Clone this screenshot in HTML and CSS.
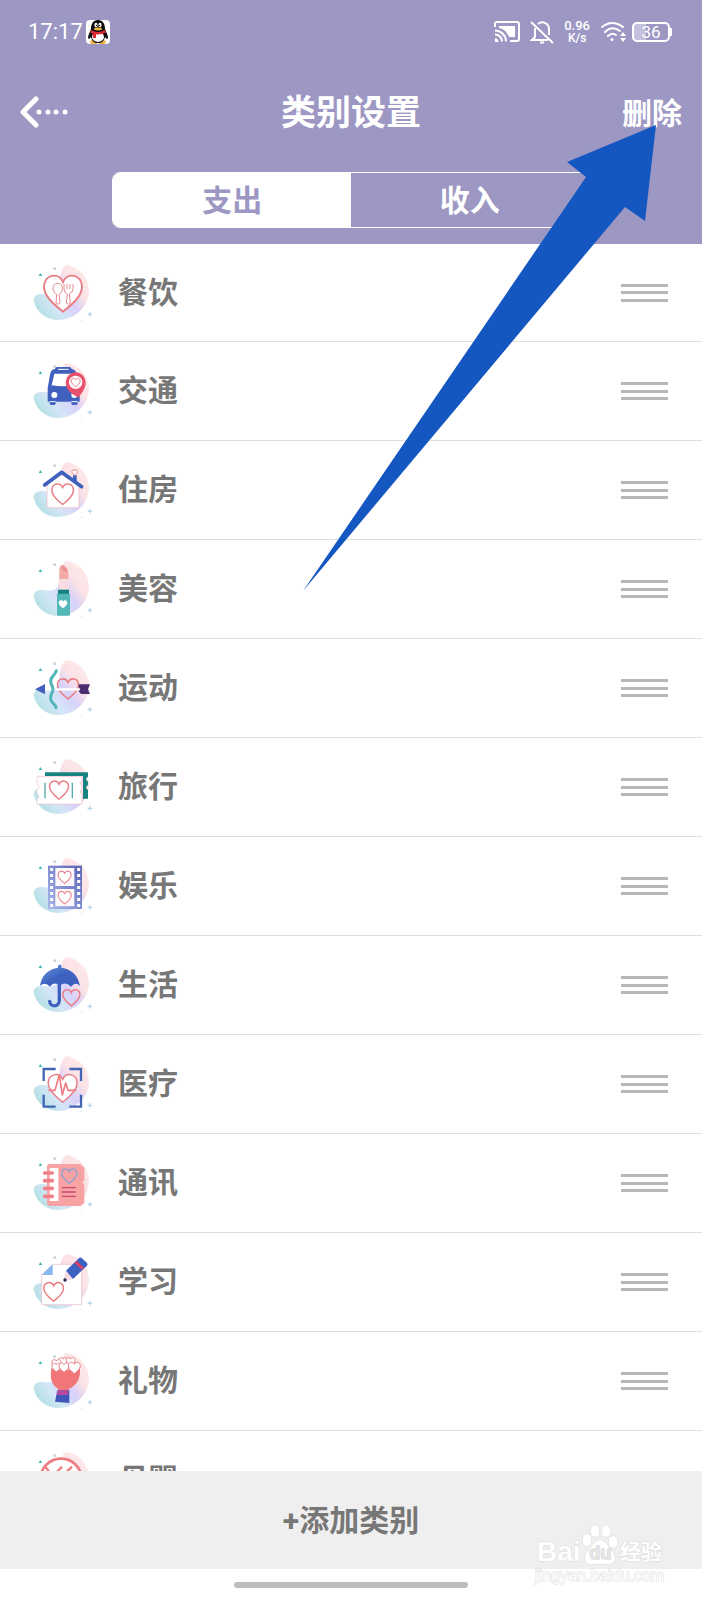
FILE: index.html
```html
<!DOCTYPE html>
<html lang="zh-CN">
<head>
    <meta charset="UTF-8">
    <meta name="viewport" content="width=device-width, initial-scale=1.0">
    <title>类别设置</title>
    <link rel="stylesheet" href="styles.css">
</head>
<body>
    <!-- 共用图形 -->
    <svg class="defs" width="0" height="0" aria-hidden="true">
        <defs>
            <linearGradient id="blobFill" gradientUnits="userSpaceOnUse" x1="50" y1="200" x2="190" y2="90">
                <stop offset="0" stop-color="#b0e0e1"/>
                <stop offset=".3" stop-color="#d4e6f7"/>
                <stop offset=".56" stop-color="#d8d1fa"/>
                <stop offset=".78" stop-color="#fbe2e6"/>
                <stop offset="1" stop-color="#fde8e8"/>
            </linearGradient>
            <linearGradient id="blue" x1="0" y1="0" x2="1" y2="1">
                <stop offset="0" stop-color="#6fa0e0"/>
                <stop offset=".5" stop-color="#3c62c0"/>
                <stop offset="1" stop-color="#3f5fbd"/>
            </linearGradient>
            <linearGradient id="film" x1="0" y1="1" x2="1" y2="0">
                <stop offset="0" stop-color="#a9b8ec"/>
                <stop offset="1" stop-color="#5a62b4"/>
            </linearGradient>
            <g id="blob">
                <path fill="url(#blobFill)" d="M138 60C178 64 208 98 208 138C207 186 165 226 112 225C78 224 48 200 42 166C42 150 58 145 78 148C102 151 116 146 119 120C120 98 124 72 138 60Z"/>
                <path fill="#45b5b5" d="M57 93L62 84L68 93Z"/>
                <circle cx="105" cy="71" r="4" fill="#c3ccd9"/>
                <path stroke="#a9cfe6" stroke-width="3" d="M204 208H218M211 201V215"/>
                <circle cx="185" cy="226" r="2" fill="#c9ddea"/>
            </g>
            <path id="heart" vector-effect="non-scaling-stroke" d="M0 30C-10 22-30 7-30-9C-30-29-7-33 0-17C7-33 30-29 30-9C30 7 10 22 0 30Z"/>
        </defs>
    </svg>

    <div class="app">
        <header class="header">
            <div class="status">
                <span class="time">17:17</span>
                <svg class="qq" viewBox="0 0 24 24" width="24" height="24" aria-hidden="true">
                    <rect width="24" height="24" rx="4" fill="#fff"/>
                    <ellipse cx="8" cy="22" rx="4" ry="2" fill="#f3b23c"/>
                    <ellipse cx="16" cy="22" rx="4" ry="2" fill="#f3b23c"/>
                    <path fill="#0b0b10" d="M12 0C7 0 5 4 5 9C4 12 2 15 2 18C3 20 4 18 5 17C6 21 8 23 12 23S18 21 19 17C20 18 21 20 22 18C22 15 20 12 19 9C19 4 17 0 12 0Z"/>
                    <ellipse cx="12" cy="17" rx="6" ry="5" fill="#fff"/>
                    <ellipse cx="10" cy="5" rx="1.6" ry="2.2" fill="#fff"/>
                    <ellipse cx="14" cy="5" rx="1.6" ry="2.2" fill="#fff"/>
                    <circle cx="10.5" cy="5.4" r=".7"/><circle cx="13.5" cy="5.4" r=".7"/>
                    <ellipse cx="12" cy="9" rx="4" ry="1.4" fill="#f3b23c"/>
                    <path fill="#e0262e" d="M5 10Q12 14 19 10L20 12.500Q15 15 10 14.500V18H7V13.500L4 12.500Z"/>
                </svg>
                <div class="status-icons">
                    <svg viewBox="0 0 26 22" width="26" height="22" fill="none" stroke="#fff" stroke-width="2" aria-hidden="true">
                        <path d="M1 6V3Q1 1 3 1H23Q25 1 25 3V18Q25 20 23 20H16"/>
                        <path d="M1 9.500A11 11 0 0 1 12 20.500M1 13.500A7 7 0 0 1 8 20.500"/>
                        <path fill="#fff" stroke="none" d="M1 17A4 4 0 0 1 4.500 21H1ZM5 5H21V16H15C13 11 10 8 5 7Z"/>
                    </svg>
                    <svg viewBox="0 0 24 24" width="24" height="24" fill="none" stroke="#fff" stroke-width="2" aria-hidden="true">
                        <path d="M1 2L23 23M8 4C13 0 19 4 19 9V15M5 8V17L2 20H18"/>
                        <path d="M10 22.500H14"/>
                    </svg>
                    <span class="speed"><span class="speed-num">0.96</span><span>K/s</span></span>
                    <svg viewBox="0 0 27 22" width="27" height="22" fill="none" stroke="#fff" stroke-width="2" stroke-linecap="round" aria-hidden="true">
                        <path d="M2 6Q12 -2 23 6M5 11Q12 4 20 10M8 15Q12 11 16 14"/>
                        <circle cx="12" cy="18.500" r="1.500" fill="#fff" stroke="none"/>
                        <path fill="#fff" stroke="none" d="M20 15L23 11L26 15ZM20 17L23 21L26 17Z"/>
                    </svg>
                    <span class="battery">36</span>
                </div>
            </div>

            <div class="titlebar">
                <button class="back" type="button" aria-label="返回">
                    <svg viewBox="0 0 48 32" width="48" height="32" fill="#fff">
                        <path fill="none" stroke="#fff" stroke-width="5" stroke-linecap="round" stroke-linejoin="round" d="M16 3L3 16L16 29"/>
                        <circle cx="19" cy="16" r="2.500"/><circle cx="28" cy="16" r="2.500"/><circle cx="36" cy="16" r="2.500"/><circle cx="45" cy="16" r="2.500"/>
                    </svg>
                </button>
                <h1>类别设置</h1>
                <button class="delete" type="button">删除</button>
            </div>

            <div class="tabs">
                <button class="tab active" type="button">支出</button>
                <button class="tab" type="button">收入</button>
            </div>
        </header>

        <ul class="list">
            <li class="row">
                <svg class="icon" viewBox="40 48 192 192" aria-hidden="true">
                    <use href="#blob"/>
                    <use href="#heart" class="heart thick" transform="translate(130 143) scale(1.900)"/>
                    <g fill="#fff" stroke="#e58a90" stroke-width="3">
                        <path d="M111 148C95 140 97 115 114 115S133 140 118 148L121 174Q115 182 109 174Z"/>
                        <path d="M133 117V132Q134 143 143 147L140 174Q146 182 152 174L149 147Q159 143 160 132V117M142 117V132M151 117V132"/>
                    </g>
                </svg>
                <span class="name">餐饮</span>
                <button class="drag" type="button" aria-label="排序"></button>
            </li>
            <li class="row">
                <svg class="icon" viewBox="40 48 192 192" aria-hidden="true">
                    <use href="#blob"/>
                    <path fill="#3f61bd" d="M106 78Q107 72 113 72H149Q155 72 156 78Q169 80 172 96L180 135V176H174V181Q174 186 169 186H160Q155 186 155 181V176H108V181Q108 186 103 186H95Q90 186 90 181V176H84V135L91 96Q93 80 106 78Z"/>
                    <path fill="#fff" d="M104 92H158L166 127Q131 133 96 127Z"/>
                    <path stroke="#fff" stroke-width="3" d="M115 79H147M90 176H108M155 176H174"/>
                    <circle cx="104" cy="156" r="9" fill="#fff"/><circle cx="164" cy="156" r="9" fill="#fff"/>
                    <path fill="#e9506c" d="M176 164C150 150 138 138 138 118A30 30 0 0 1 198 118C198 138 186 150 176 164Z"/>
                    <circle cx="168" cy="118" r="20" fill="#fff"/>
                    <use href="#heart" class="heart thin" transform="translate(168 118) scale(.45)"/>
                </svg>
                <span class="name">交通</span>
                <button class="drag" type="button" aria-label="排序"></button>
            </li>
            <li class="row">
                <svg class="icon" viewBox="40 48 192 192" aria-hidden="true">
                    <use href="#blob"/>
                    <path fill="#fff" stroke="#f1b6c3" stroke-width="2" d="M82 126L127 98L178 126V192Q178 197 173 197H87Q82 197 82 192Z"/>
                    <path fill="#3f61bd" d="M160 100H171V122L160 115Z"/>
                    <path fill="none" stroke="#3f61bd" stroke-width="11" stroke-linecap="round" stroke-linejoin="round" d="M75 129L126 91L186 134"/>
                    <use href="#heart" class="heart thin" transform="translate(165 91) scale(.28)"/>
                    <use href="#heart" class="heart" transform="translate(129 155) scale(1.080)"/>
                </svg>
                <span class="name">住房</span>
                <button class="drag" type="button" aria-label="排序"></button>
            </li>
            <li class="row">
                <svg class="icon" viewBox="40 48 192 192" aria-hidden="true">
                    <use href="#blob"/>
                    <path fill="#f4aaa5" d="M119 116V82Q122 72 130 71Q143 78 146 91V118Z"/>
                    <path fill="#e98a8c" d="M124 74Q142 78 142 92Q128 88 124 74Z"/>
                    <path fill="#f8dce4" d="M117 114H146V148H117Z"/>
                    <path fill="#16817f" d="M115 146H148V160H115Z"/>
                    <path fill="#54b8b8" d="M112 158H151V220Q151 224 147 224H116Q112 224 112 220Z"/>
                    <use href="#heart" fill="#fff" transform="translate(130 189) scale(.43)"/>
                </svg>
                <span class="name">美容</span>
                <button class="drag" type="button" aria-label="排序"></button>
            </li>
            <li class="row">
                <svg class="icon" viewBox="40 48 192 192" aria-hidden="true">
                    <use href="#blob"/>
                    <use href="#heart" class="heart line" transform="translate(145 145) scale(1.050)"/>
                    <path stroke="#fff" stroke-width="7" d="M74 148H182"/>
                    <path fill="none" stroke="#52b5b7" stroke-width="9" stroke-linecap="round" d="M110 92C105 110 91 109 93 125C95 137 100 139 100 148C100 159 91 162 93 177C94 190 106 188 109 203"/>
                    <path fill="#3f61bd" d="M46 148L76 132V163Z"/>
                    <path fill="#4a2d70" d="M177 133H211L205 148L211 162H184L177 154L182 148L177 142Z"/>
                </svg>
                <span class="name">运动</span>
                <button class="drag" type="button" aria-label="排序"></button>
            </li>
            <li class="row">
                <svg class="icon" viewBox="40 48 192 192" aria-hidden="true">
                    <use href="#blob"/>
                    <path fill="#188481" d="M76 100H205V113Q194 119 205 128V138Q194 145 205 153V179H190V111H76Z"/>
                    <path fill="#fff" stroke="#f3bfca" stroke-width="2" d="M52 113H187V125Q176 132 187 140V150Q176 157 187 165V195H52V180Q63 172 52 164V150Q63 143 52 135Z"/>
                    <path stroke="#57aaad" stroke-width="4" d="M76 131V178M158 131V178"/>
                    <use href="#heart" class="heart" transform="translate(118 152) scale(.95)"/>
                </svg>
                <span class="name">旅行</span>
                <button class="drag" type="button" aria-label="排序"></button>
            </li>
            <li class="row">
                <svg class="icon" viewBox="40 48 192 192" aria-hidden="true">
                    <use href="#blob"/>
                    <rect x="85" y="83" width="102" height="130" fill="url(#film)"/>
                    <path fill="#fdf6fb" d="M107 90H164V144H107ZM107 153H164V205H107Z"/>
                    <path stroke="#fff" stroke-width="9" stroke-dasharray="9 9" d="M96 90V210M177 90V210"/>
                    <use href="#heart" class="heart thin" transform="translate(135 117) scale(.65)"/>
                    <use href="#heart" class="heart thin" transform="translate(135 178) scale(.65)"/>
                </svg>
                <span class="name">娱乐</span>
                <button class="drag" type="button" aria-label="排序"></button>
            </li>
            <li class="row">
                <svg class="icon" viewBox="40 48 192 192" aria-hidden="true">
                    <use href="#blob"/>
                    <path fill="url(#blue)" d="M115 92V86Q120 79 125 86V92C156 96 176 116 181 147Q167 132 154 149Q138 131 120 146Q103 131 91 149Q76 132 61 147C65 116 85 96 115 92Z"/>
                    <path fill="none" stroke="#3f61bd" stroke-width="10" stroke-linecap="round" d="M119 137V190C119 212 91 211 90 193"/>
                    <use href="#heart" class="heart line" transform="translate(155 181) scale(.85)"/>
                </svg>
                <span class="name">生活</span>
                <button class="drag" type="button" aria-label="排序"></button>
            </li>
            <li class="row">
                <svg class="icon" viewBox="40 48 192 192" aria-hidden="true">
                    <use href="#blob"/>
                    <use href="#heart" class="heart" transform="translate(129 155) scale(1.450)"/>
                    <path fill="none" stroke="#ee7c81" stroke-width="5" stroke-linejoin="round" d="M86 163H106L119 117L128 177L138 141L145 163H170"/>
                    <path fill="none" stroke="#4464b4" stroke-width="7" d="M108 99H72V135M149 99H184V135M108 212H72V176M149 212H184V176"/>
                </svg>
                <span class="name">医疗</span>
                <button class="drag" type="button" aria-label="排序"></button>
            </li>
            <li class="row">
                <svg class="icon" viewBox="40 48 192 192" aria-hidden="true">
                    <use href="#blob"/>
                    <path fill="#f7a3a3" d="M90 87H180Q187 87 187 94L194 97V137L187 142L194 147V203Q194 207 188 207L185 213H90Q82 213 82 205V95Q82 87 90 87Z"/>
                    <path fill="#fff" d="M90 99H116V198H90Z"/>
                    <path stroke="#ef8288" stroke-width="11" stroke-linecap="round" d="M75 114H98M75 137H98M75 160H98M75 184H98"/>
                    <use href="#heart" class="heart blue" transform="translate(149 122) scale(.75)"/>
                    <path stroke="#c94470" stroke-width="4" d="M126 158H168M126 171H168M126 184H168"/>
                </svg>
                <span class="name">通讯</span>
                <button class="drag" type="button" aria-label="排序"></button>
            </li>
            <li class="row">
                <svg class="icon" viewBox="40 48 192 192" aria-hidden="true">
                    <use href="#blob"/>
                    <path fill="#fff" stroke="#f1b4c4" stroke-width="2" d="M66 123L99 91H180Q186 91 186 97V212H66Z"/>
                    <path fill="#85b7ec" d="M66 123L99 91V123Z"/>
                    <path fill="#f7dbe2" d="M139 110L160 135L136 141L131 137Z"/>
                    <path fill="#3d61c0" d="M139 110L179 71Q183 69 187 73L202 87Q205 91 202 95L160 135Z"/>
                    <path fill="#d63f67" d="M164 86L171 80L193 102L187 108Z"/>
                    <circle cx="136" cy="138" r="5" fill="#26234e"/>
                    <use href="#heart" class="heart" transform="translate(102 172) scale(.98)"/>
                </svg>
                <span class="name">学习</span>
                <button class="drag" type="button" aria-label="排序"></button>
            </li>
            <li class="row">
                <svg class="icon" viewBox="40 48 192 192" aria-hidden="true">
                    <use href="#blob"/>
                    <path fill="#f17679" d="M95 106Q138 116 181 106C183 140 170 157 149 167L145 176H118L115 167C94 155 91 134 95 106Z"/>
                    <path fill="#3f56b8" d="M113 172H149V210L106 206Z"/>
                    <path fill="#b74aa0" d="M113 172H146V186H111Z"/>
                    <use href="#heart" class="heart thin" transform="translate(130 86) scale(.45)"/>
                    <use href="#heart" class="heart thin" transform="translate(153 86) scale(.45)"/>
                    <use href="#heart" class="heart thin" transform="translate(110 92) scale(.45)"/>
                    <use href="#heart" class="heart thin" transform="translate(110 103) scale(.45)"/>
                    <use href="#heart" class="heart thin" transform="translate(133 103) scale(.5)"/>
                    <use href="#heart" class="heart thin" transform="translate(164 104) scale(.6)"/>
                </svg>
                <span class="name">礼物</span>
                <button class="drag" type="button" aria-label="排序"></button>
            </li>
            <li class="row">
                <svg class="icon" viewBox="40 48 192 192" aria-hidden="true">
                    <use href="#blob"/>
                    <circle cx="124" cy="142" r="62" fill="#fff" stroke="#ee7c81" stroke-width="8"/>
                    <path stroke="#ee7c81" stroke-width="7" stroke-linecap="round" d="M80 108L86 116M125 106L104 128M155 106L132 128"/>
                </svg>
                <span class="name">母婴</span>
                <button class="drag" type="button" aria-label="排序"></button>
            </li>
        </ul>

        <button class="add" type="button">+添加类别</button>
        <div class="navbar"><span class="home-bar"></span></div>

        <svg class="pointer" viewBox="0 0 353 466" width="353" height="466" aria-hidden="true">
            <path fill="#1557c0" d="M353 0L264 37L283 52L0 466L322 82L342 96Z"/>
        </svg>

        <div class="watermark">
            <div class="brand">
                <span class="bai">Bai</span>
                <span class="paw">
                    <svg viewBox="0 0 38 42" width="38" height="42" fill="#fff" stroke="#d9d9d9" aria-hidden="true">
                        <ellipse cx="6" cy="16" rx="4.500" ry="6"/>
                        <ellipse cx="14" cy="7" rx="4.500" ry="6"/>
                        <ellipse cx="25" cy="7" rx="4.500" ry="6"/>
                        <ellipse cx="32" cy="18" rx="4.500" ry="6"/>
                        <path d="M19 16C25 16 27 23 31 27C36 32 35 40 27 40H10C3 40 2 32 7 27C11 23 13 16 19 16Z"/>
                    </svg>
                    <span class="du">du</span>
                </span>
                <span class="jy">经验</span>
            </div>
            <div class="url">jingyan.baidu.com</div>
        </div>
    </div>
</body>
</html>
```

FILE: styles.css
```css
* {
    box-sizing: border-box;
}
html, body {
    height: 100%;
    margin: 0;
    padding: 0;
}
body {
    font-family: Roboto, "Noto Sans CJK SC", sans-serif;
    background-color: #fff;
    color: #777;
}
button {
    font: inherit;
    color: inherit;
    background: none;
    border: none;
    padding: 0;
    cursor: pointer;
}
svg {
    display: block;
    flex: none;
}
.defs {
    position: absolute;
}
.app {
    position: relative;
    height: 100vh;
    display: flex;
    flex-direction: column;
    overflow: hidden;
}

/* 顶部 */
.header {
    flex: none;
    background-color: #9d97c4;
    color: #fff;
    padding-bottom: 16px;
}
.status {
    height: 64px;
    display: flex;
    align-items: center;
    gap: 3px;
    padding: 0 32px 0 28px;
}
.time {
    font-size: 22px;
    line-height: 24px;
}
.status-icons {
    margin-left: auto;
    display: flex;
    align-items: center;
    gap: 10px;
}
.speed {
    display: flex;
    flex-direction: column;
    align-items: center;
    font-size: 12px;
    font-weight: 500;
    line-height: 13px;
}
.speed-num {
    font-size: 13px;
}
.battery {
    position: relative;
    width: 38px;
    height: 20px;
    margin-left: -5px;
    border: 2px solid #fff;
    border-radius: 5px;
    background: linear-gradient(to right, #c4c0dd 36%, transparent 36%);
    font-size: 17px;
    line-height: 17px;
    text-align: center;
}
.battery::after {
    content: "";
    position: absolute;
    right: -4px;
    top: 4px;
    width: 2px;
    height: 8px;
    background-color: #fff;
}
.titlebar {
    height: 96px;
    display: grid;
    grid-template-columns: 1fr auto 1fr;
    align-items: center;
    padding: 0 20px;
}
.back {
    justify-self: start;
}
h1 {
    margin: 0;
    padding-top: 4px;
    font-size: 35px;
    line-height: 48px;
    font-weight: 700;
}
.delete {
    justify-self: end;
    padding-top: 4px;
    font-size: 30px;
    line-height: 40px;
    font-weight: 700;
}
.tabs {
    display: flex;
    width: 68%;
    height: 56px;
    margin: 12px auto 0;
    border: 1px solid #fff;
    border-radius: 8px;
    overflow: hidden;
}
.tab {
    flex: 1;
    padding-bottom: 4px;
    font-size: 30px;
    font-weight: 700;
}
.tab.active {
    background-color: #fff;
    color: #9d97c4;
}

/* 类别列表 */
.list {
    flex: 1;
    min-height: 0;
    overflow: hidden;
    margin: 0;
    padding: 0;
    list-style: none;
}
.row {
    height: 99px;
    display: flex;
    align-items: center;
    padding: 0 34px 0 33px;
    border-bottom: 1px solid #dedede;
}
.row:first-child {
    height: 98px;
}
.icon {
    width: 64px;
    height: 64px;
}
.heart {
    fill: #fff;
    stroke: #e97f86;
    stroke-width: 1.5px;
}
.heart.thick {
    stroke-width: 2px;
}
.heart.thin {
    stroke-width: 1px;
}
.heart.line {
    fill: none;
}
.heart.blue {
    fill: none;
    stroke: #96a0d2;
}
.name {
    flex: 1;
    margin-left: 21px;
    font-size: 30px;
    line-height: 40px;
    font-weight: 700;
}
.drag {
    width: 47px;
    height: 18px;
    border-top: 3px solid #b7b7b9;
    border-bottom: 3px solid #b7b7b9;
    background: linear-gradient(#b7b7b9, #b7b7b9) center / 100% 3px no-repeat;
}

/* 底部 */
.add {
    flex: none;
    height: 98px;
    padding-bottom: 4px;
    background-color: #efefef;
    font-size: 30px;
    font-weight: 700;
}
.navbar {
    flex: none;
    height: 31px;
    display: flex;
    justify-content: center;
    align-items: center;
}
.home-bar {
    width: 234px;
    height: 6px;
    border-radius: 3px;
    background-color: #bdbdbd;
}

/* 箭头标注和水印 */
.pointer {
    position: absolute;
    top: 125px;
    right: 46px;
    pointer-events: none;
}
.watermark {
    position: absolute;
    right: 38px;
    bottom: 14px;
    font-family: "Liberation Sans", "Noto Sans CJK SC", sans-serif;
    color: #fff;
    -webkit-text-stroke: 1px #dadada;
    paint-order: stroke fill;
    pointer-events: none;
}
.brand {
    display: flex;
    justify-content: space-between;
    align-items: flex-end;
    padding: 0 2px;
    font-weight: 700;
}
.bai {
    font-size: 28px;
    line-height: 28px;
}
.paw {
    position: relative;
}
.du {
    position: absolute;
    left: 0;
    right: 0;
    bottom: 4px;
    text-align: center;
    font-size: 18px;
    line-height: 18px;
    color: #e6e6e6;
    -webkit-text-stroke: 1px #cfcfcf;
}
.jy {
    font-size: 21px;
    line-height: 28px;
}
.url {
    font-size: 16px;
    line-height: 20px;
}
```
